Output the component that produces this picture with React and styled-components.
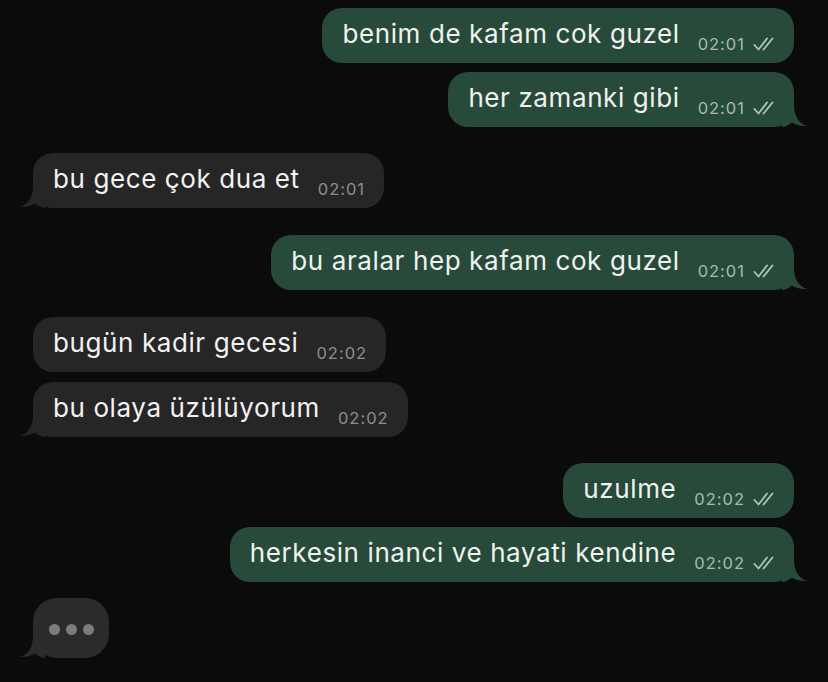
import React from "react";
import styled, { createGlobalStyle } from "styled-components";

const GlobalStyle = createGlobalStyle`
  html, body {
    margin: 0;
    padding: 0;
    background: #0b0b0b;
  }
`;

const messages = [
  { side: "out", text: "benim de kafam cok guzel", time: "02:01", gap: 8, tail: false },
  { side: "out", text: "her zamanki gibi", time: "02:01", gap: 9, tail: true },
  { side: "in", text: "bu gece çok dua et", time: "02:01", gap: 26, tail: true },
  { side: "out", text: "bu aralar hep kafam cok guzel", time: "02:01", gap: 27, tail: true },
  { side: "in", text: "bugün kadir gecesi", time: "02:02", gap: 27, tail: false },
  { side: "in", text: "bu olaya üzülüyorum", time: "02:02", gap: 10, tail: true },
  { side: "out", text: "uzulme", time: "02:02", gap: 26, tail: false },
  { side: "out", text: "herkesin inanci ve hayati kendine", time: "02:02", gap: 9, tail: true },
];

function Tail({ side }) {
  return (
    <TailSvg $side={side} width="26" height="28" viewBox="0 0 26 28">
      <path d="M0 0 H12 V6 C12 16 16 24 25 27 C19 27.5 14 26 10 23.5 C7 26 3 28 0 28 Z" />
    </TailSvg>
  );
}

function Ticks() {
  return (
    <TickSvg width="22" height="14" viewBox="0 0 22 14">
      <path d="M1.5 8 L5.5 12.5 L14 1.5" />
      <path d="M10.5 12.5 L19.5 1.5" />
    </TickSvg>
  );
}

export default function App() {
  return (
    <>
      <GlobalStyle />
      <Screen>
        {messages.map((m, i) => (
          <Row key={i} $side={m.side} $gap={m.gap}>
            <Bubble $side={m.side}>
              <Text>{m.text}</Text>
              <Meta $side={m.side}>
                {m.time}
                {m.side === "out" && <Ticks />}
              </Meta>
              {m.tail && <Tail side={m.side} />}
            </Bubble>
          </Row>
        ))}
        <Row $side="in" $gap={16}>
          <Typing>
            <Dot />
            <Dot />
            <Dot />
            <Tail side="typing" />
          </Typing>
        </Row>
      </Screen>
    </>
  );
}

const Screen = styled.div`
  width: 828px;
  height: 682px;
  overflow: hidden;
  background: #0b0b0b;
  display: flex;
  flex-direction: column;
  padding: 0 34px 0 33px;
  box-sizing: border-box;
  font-family: Inter, "Noto Sans", sans-serif;
`;

const Row = styled.div`
  display: flex;
  flex-shrink: 0;
  justify-content: ${(p) => (p.$side === "out" ? "flex-end" : "flex-start")};
  margin-top: ${(p) => p.$gap}px;
`;

const Bubble = styled.div`
  position: relative;
  height: 55px;
  box-sizing: border-box;
  display: flex;
  align-items: center;
  padding: 0 19px 0 20px;
  border-radius: 20px;
  background: ${(p) => (p.$side === "out" ? "#284a3b" : "#262626")};
  color: ${(p) => (p.$side === "out" ? "#eef3ee" : "#f2f2f2")};
`;

const Text = styled.span`
  font-size: 26px;
  letter-spacing: 0.6px;
  line-height: 1;
  margin-top: -3px;
`;

const Meta = styled.span`
  display: flex;
  align-items: center;
  gap: 8px;
  margin-left: 18px;
  margin-top: 16px;
  font-size: 16.5px;
  letter-spacing: 1px;
  color: ${(p) => (p.$side === "out" ? "#a6bcae" : "#8e8e8e")};
`;

const TickSvg = styled.svg`
  fill: none;
  stroke: #b3c6b9;
  stroke-width: 1.8;
  stroke-linecap: round;
  stroke-linejoin: round;
`;

const TailSvg = styled.svg`
  position: absolute;
  bottom: 0;
  fill: ${(p) => (p.$side === "out" ? "#284a3b" : p.$side === "typing" ? "#2b2b2b" : "#262626")};
  ${(p) =>
    p.$side === "out"
      ? "right: -14px;"
      : "left: -14px; transform: scaleX(-1);"}
`;

const Typing = styled.div`
  position: relative;
  width: 76px;
  height: 60px;
  border-radius: 24px;
  background: #2b2b2b;
  display: flex;
  align-items: center;
  justify-content: center;
  gap: 6px;
  padding-top: 2px;
  box-sizing: border-box;
`;

const Dot = styled.span`
  width: 11px;
  height: 11px;
  border-radius: 50%;
  background: #7c7c7c;
`;
